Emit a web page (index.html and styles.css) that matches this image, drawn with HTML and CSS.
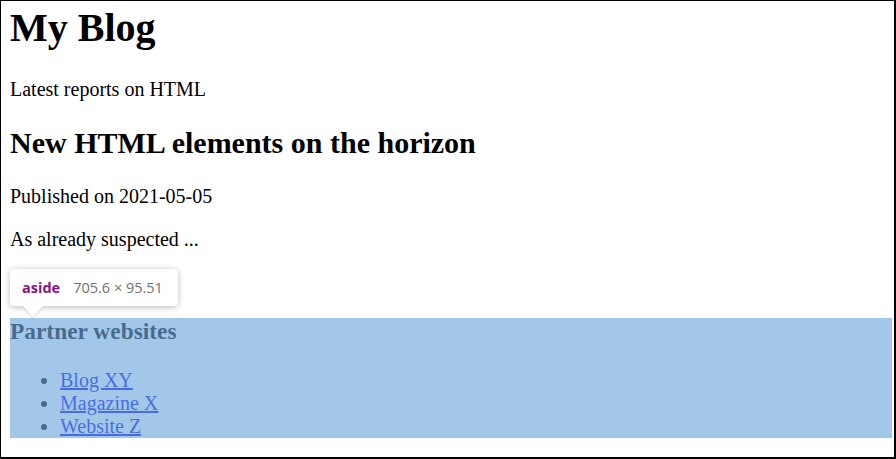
FILE: index.html
```html
<!DOCTYPE html>
<html lang="en">
<head>
<meta charset="utf-8">
<title>My Blog</title>
<link rel="stylesheet" href="styles.css">
</head>
<body>
<div class="frame">
  <header class="site-header">
    <h1 class="site-title">My Blog</h1>
    <p class="text">Latest reports on HTML</p>
  </header>
  <article class="post">
    <h2 class="post-title">New HTML elements on the horizon</h2>
    <p class="text">Published on <time datetime="2021-05-05">2021-05-05</time></p>
    <p class="text">As already suspected ...</p>
  </article>
  <aside class="partners">
    <h3 class="partners-title">Partner websites</h3>
    <ul class="partners-list">
      <li><a class="link" href="#">Blog XY</a></li>
      <li><a class="link" href="#">Magazine X</a></li>
      <li><a class="link" href="#">Website Z</a></li>
    </ul>
    <div class="highlight"></div>
  </aside>
  <div class="tooltip">
    <span class="tag">aside</span><span class="dims">705.6 × 95.51</span>
    <span class="arrow"></span>
  </div>
</div>
</body>
</html>
```

FILE: styles.css
```css
html, body {
  margin: 0;
  padding: 0;
  background: #fff;
}
.frame {
  position: relative;
  box-sizing: border-box;
  width: 896px;
  height: 459px;
  overflow: hidden;
  border-style: solid;
  border-color: #000;
  border-width: 1px 2px 2px 1px;
  padding: 3px 2px 0 9px;
  font-family: "Liberation Serif", "Times New Roman", serif;
  font-size: 20px;
  color: #000;
}
.site-title {
  font-size: 40px;
  font-weight: bold;
  margin: 0 0 26.8px;
}
.text {
  margin: 20px 0;
}
.post-title {
  font-size: 30px;
  font-weight: bold;
  margin: 24.9px 0;
}
.partners {
  position: relative;
  margin-top: 67.6px;
}
.partners-title {
  font-size: 23.4px;
  font-weight: bold;
  margin: 23.4px 0;
}
.partners-list {
  margin: 20px 0;
  padding-left: 50px;
  list-style: disc;
}
.link {
  color: #0000ee;
  text-decoration: underline;
}
.highlight {
  position: absolute;
  inset: 0;
  background: rgba(111, 168, 220, 0.64);
}
.tooltip {
  position: absolute;
  left: 9px;
  top: 268px;
  width: 168px;
  height: 37px;
  box-sizing: border-box;
  padding: 0 12px;
  display: flex;
  align-items: center;
  gap: 13px;
  white-space: nowrap;
  background: #fff;
  border-radius: 4px;
  box-shadow: 0 1px 6px rgba(0, 0, 0, 0.28);
  font-family: "Open Sans", "Noto Sans", sans-serif;
  font-size: 14.5px;
}
.tag {
  color: #881280;
  font-weight: bold;
}
.dims {
  color: #707070;
}
.arrow {
  position: absolute;
  left: 13px;
  top: 37px;
  width: 0;
  height: 0;
  border-left: 10px solid transparent;
  border-right: 10px solid transparent;
  border-top: 11px solid #fff;
  filter: drop-shadow(0 2px 1px rgba(0, 0, 0, 0.12));
}
```
